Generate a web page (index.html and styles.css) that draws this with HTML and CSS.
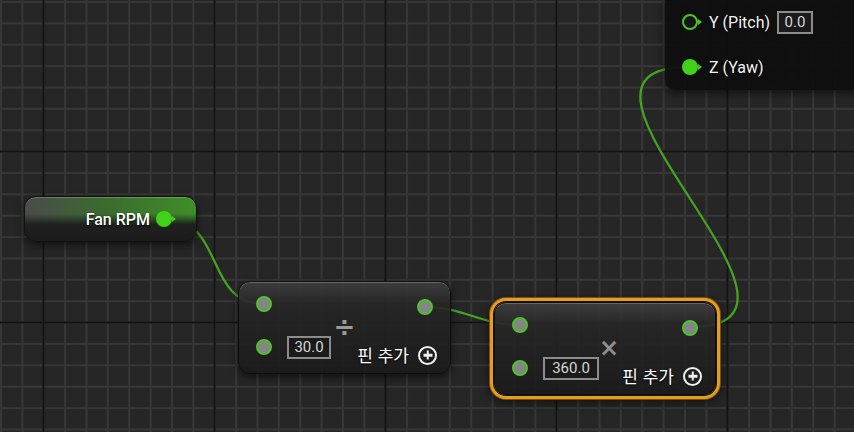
FILE: index.html
```html
<!DOCTYPE html>
<html lang="ko">
<head>
  <meta charset="UTF-8">
  <meta name="viewport" content="width=device-width, initial-scale=1.0">
  <title>Blueprint Graph</title>
  <link rel="stylesheet" href="styles.css">
</head>
<body>
  <div class="graph">
    <svg class="wires" width="854" height="432" viewBox="0 0 854 432">
      <path d="M165 219 C 225 219, 204 304, 264 304" />
      <path d="M425 307 C 465 307, 480 325, 520 325" />
      <path d="M690 327 C 856 327, 522 67, 688 67" />
    </svg>

    <!-- break struct node, only partly in view -->
    <div class="node struct">
      <div class="struct-row">
        <span class="pin hollow arrow"></span>
        <span class="label">Y (Pitch)</span>
        <span class="val">0.0</span>
      </div>
      <div class="struct-row">
        <span class="pin filled arrow"></span>
        <span class="label">Z (Yaw)</span>
      </div>
    </div>

    <div class="node getter">
      <span class="label">Fan RPM</span>
      <span class="pin filled arrow"></span>
    </div>

    <div class="node op divide">
      <div class="inputs">
        <div class="in-row"><span class="pin"></span></div>
        <div class="in-row"><span class="pin"></span><span class="val w44">30.0</span></div>
      </div>
      <div class="symbol">÷</div>
      <div class="outputs">
        <span class="pin"></span>
        <span class="add">핀 추가 <i class="plus"></i></span>
      </div>
    </div>

    <div class="node op multiply selected">
      <div class="inputs">
        <div class="in-row"><span class="pin"></span></div>
        <div class="in-row"><span class="pin"></span><span class="val w56">360.0</span></div>
      </div>
      <div class="symbol times">×</div>
      <div class="outputs">
        <span class="pin"></span>
        <span class="add">핀 추가 <i class="plus"></i></span>
      </div>
    </div>
  </div>
</body>
</html>
```

FILE: styles.css
```css
body {
  margin: 0;
  background: #262626;
  font-family: Roboto, "Noto Sans CJK KR", sans-serif;
  color: #fff;
}

.graph {
  position: relative;
  width: 854px;
  height: 432px;
  overflow: hidden;
  background-color: #262626;
  background-image:
    linear-gradient(to right, #131313 2px, transparent 2px),
    linear-gradient(to bottom, #131313 2px, transparent 2px),
    linear-gradient(to right, #373737 2px, transparent 2px),
    linear-gradient(to bottom, #373737 2px, transparent 2px);
  background-size: 171px 171px, 171px 171px, 21.375px 21.375px, 21.375px 21.375px;
  background-position: 42.5px 150.5px, 42.5px 150.5px, 0px 1px, 0px 1px;
}

.wires {
  position: absolute;
  left: 0;
  top: 0;
}
.wires path {
  fill: none;
  stroke: #45a322;
  stroke-width: 2.3;
}

/* nodes */
.node {
  position: absolute;
  box-sizing: border-box;
  border-radius: 12px;
  box-shadow: 0 3px 8px rgba(0, 0, 0, 0.55), inset 0 1px 0 rgba(255, 255, 255, 0.22);
}

.label {
  font-size: 16px;
  font-weight: 500;
  white-space: nowrap;
  text-shadow: 0 1px 2px #000;
}
.struct .label {
  font-weight: 400;
  color: #f2f2f2;
}

.val {
  box-sizing: border-box;
  height: 23px;
  border: 2px solid #8c8c8c;
  background: #1a1a1a;
  color: #d6d6d6;
  font-size: 15px;
  line-height: 19px;
  text-align: center;
}
.w44 {
  width: 44px;
}
.w56 {
  width: 56px;
}

/* pins */
.pin {
  position: relative;
  flex: none;
  box-sizing: border-box;
  width: 16px;
  height: 16px;
  border-radius: 50%;
  border: 2.5px solid #4cc426;
  background: #858585;
}
.pin.filled {
  background: #3fd219;
  border-color: #3fd219;
}
.pin.hollow {
  background: #141414;
  border-color: #4cc426;
}
.pin.arrow::after {
  content: "";
  position: absolute;
  left: 14px;
  top: 3px;
  border-left: 4px solid #4cc426;
  border-top: 3px solid transparent;
  border-bottom: 3px solid transparent;
}

/* Fan RPM getter */
.getter {
  left: 24px;
  top: 196px;
  width: 173px;
  height: 46px;
  display: flex;
  align-items: center;
  justify-content: flex-end;
  gap: 6px;
  padding-right: 24px;
  border: 1px solid #101010;
  background:
    linear-gradient(180deg, rgba(0, 0, 0, 0) 0%, rgba(0, 0, 0, 0) 38%, #1f211f 62%, #1a1a1a 100%),
    linear-gradient(90deg, #4b4b4b 0%, #3b6a2e 45%, #3f8e29 100%);
}

/* break struct */
.struct {
  left: 665px;
  top: -10px;
  width: 220px;
  height: 100px;
  padding: 20px 0 0 17px;
  background: rgba(14, 14, 14, 0.94);
  border-radius: 10px;
  display: flex;
  flex-direction: column;
  gap: 21px;
}
.struct-row {
  height: 24px;
  display: flex;
  align-items: center;
  gap: 11px;
}
.struct-row .val {
  margin-left: -4px;
  width: 36px;
}

/* operator nodes */
.op {
  height: 93px;
  display: grid;
  grid-template-columns: 1fr auto 1fr;
  border: 1px solid #0e0e0e;
  background: linear-gradient(180deg, rgba(62, 62, 62, 0.94) 0px, rgba(38, 38, 38, 0.92) 22px, rgba(26, 26, 26, 0.9) 100%);
}
.divide {
  left: 238px;
  top: 281px;
  width: 213px;
}
.multiply {
  left: 494px;
  top: 302px;
  width: 222px;
}
.selected {
  box-shadow:
    0 0 0 1px #1b1308,
    0 0 0 4px #e39d1f,
    0 0 0 5px #7a5010,
    0 3px 10px 5px rgba(0, 0, 0, 0.5),
    inset 0 1px 0 rgba(255, 255, 255, 0.22);
}

.inputs {
  display: flex;
  flex-direction: column;
  gap: 21px;
  padding: 11px 0 0 17px;
}
.in-row {
  height: 22px;
  display: flex;
  align-items: center;
  gap: 15px;
}

.symbol {
  align-self: center;
  color: #9a9a9a;
  font-family: "DejaVu Sans", sans-serif;
  font-size: 26px;
  font-weight: bold;
  line-height: 1;
  margin-top: -2px;
}
.symbol.times {
  font-size: 24px;
  color: #8e8e8e;
}

.outputs {
  display: flex;
  flex-direction: column;
  align-items: flex-end;
  padding: 17px 13px 0 0;
}
.outputs > .pin {
  margin-right: 4px;
}

.add {
  margin-top: 29px;
  display: flex;
  align-items: center;
  gap: 9px;
  font-family: "Noto Sans CJK KR", sans-serif;
  font-size: 17px;
  font-weight: 400;
  line-height: 22px;
  text-shadow: 0 1px 2px #000;
  white-space: nowrap;
}
.plus {
  position: relative;
  box-sizing: border-box;
  width: 19px;
  height: 19px;
  border: 2px solid #f0f0f0;
  border-radius: 50%;
}
.plus::before,
.plus::after {
  content: "";
  position: absolute;
  background: #f0f0f0;
  left: 50%;
  top: 50%;
  transform: translate(-50%, -50%);
}
.plus::before {
  width: 9px;
  height: 2.5px;
}
.plus::after {
  width: 2.5px;
  height: 9px;
}
```
